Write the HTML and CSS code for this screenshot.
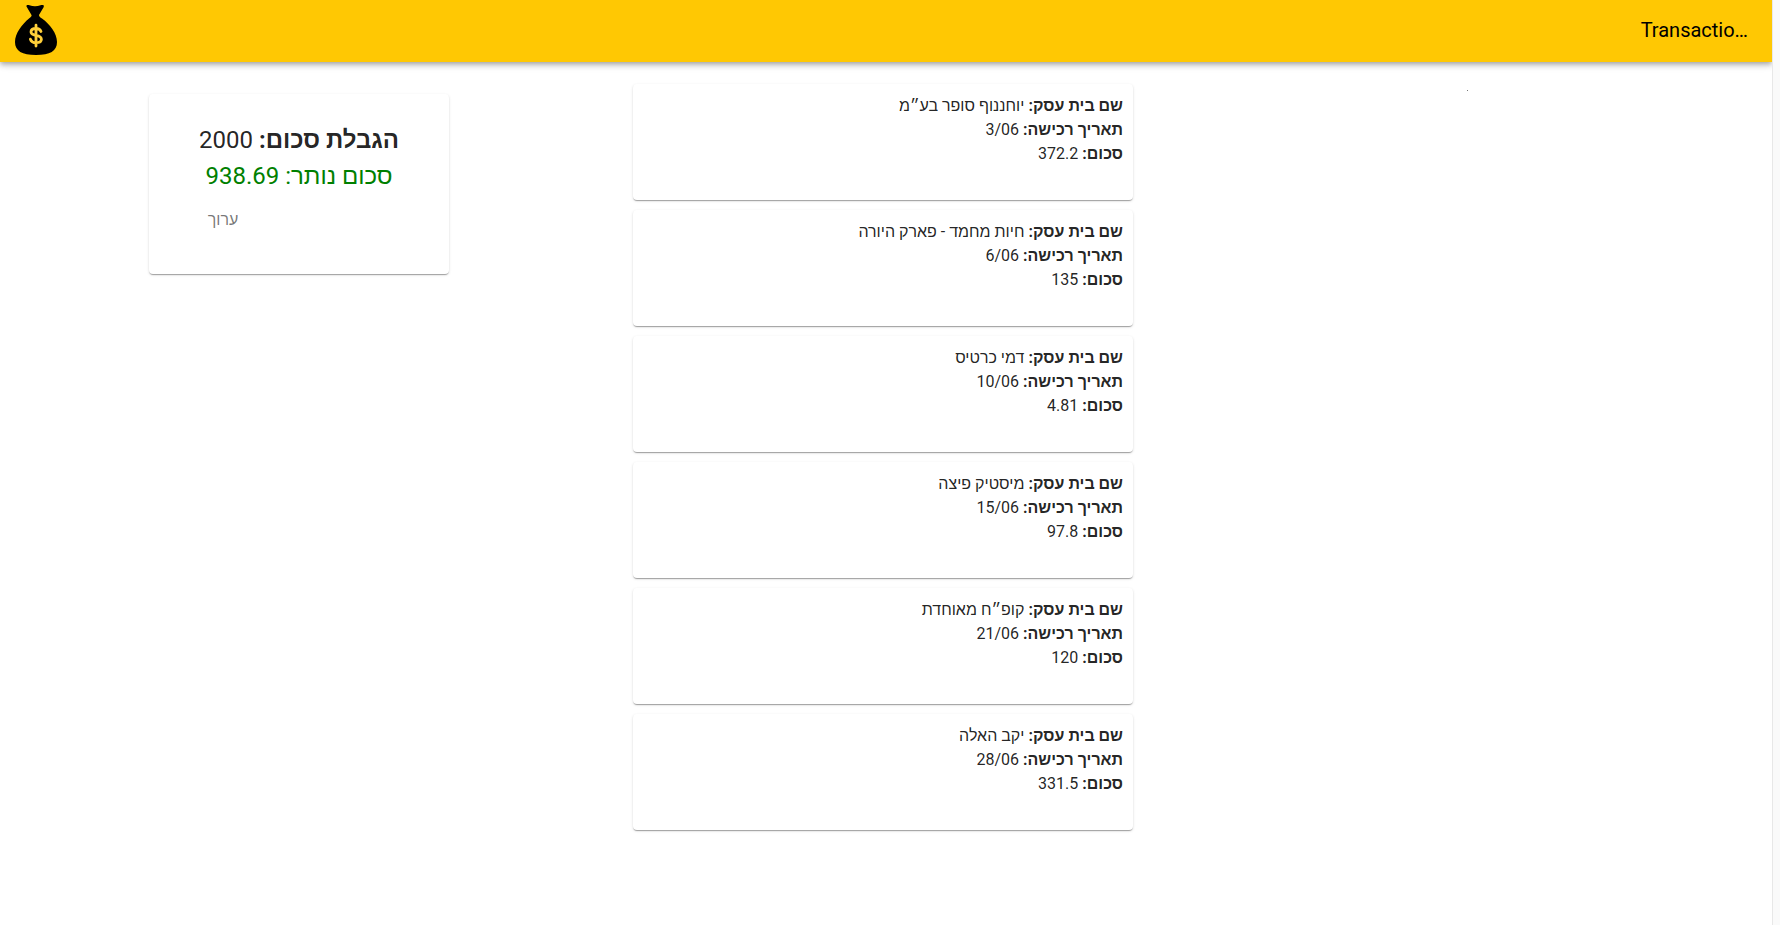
FILE: index.html
```html
<!DOCTYPE html>
<html lang="he">
<head>
<meta charset="utf-8">
<meta name="viewport" content="width=device-width, initial-scale=1">
<title>Transactions</title>
<link rel="stylesheet" href="styles.css">
</head>
<body>
<div class="page">
  <header class="app-bar">
    <svg class="logo" viewBox="0 0 42 50" aria-hidden="true">
      <path d="M11.500 1.500C11 0 13 -0.300 14.500 0.300C18 1.700 22 1.700 25.500 0.300C28 -0.300 29.500 0 28.600 2.200L24 10C24 11.500 25 12.200 27 13.600C35 19.500 42 28.500 42 37C42 46 35 50 21 50C7 50 0 46 0 37C0 28.500 7 19.500 14 13.600C15.500 12.400 17 11.500 16.500 10Z"/>
      <path class="coin" d="M26 26.500C25.200 24.300 23.300 23.500 21 23.500C18 23.500 16 24.800 16 27C16 31.800 26.400 29 26.400 34.200C26.400 36.600 24.200 37.700 21 37.700C18.200 37.700 16.200 36.600 15.400 34.200M21 20.200V41"/>
    </svg>
    <h1 class="title">Transactio…</h1>
  </header>
  <main class="columns">
    <section class="card limit">
      <p class="limit-line"><b>הגבלת סכום:</b> 2000</p>
      <p class="limit-line remaining">סכום נותר: 938.69</p>
      <button class="edit" type="button">ערוך</button>
    </section>
    <section class="list">
      <article class="card transaction">
        <p><b>שם בית עסק:</b> יוחננוף סופר בע״מ</p>
        <p><b>תאריך רכישה:</b> <bdi>3/06</bdi></p>
        <p><b>סכום:</b> 372.2</p>
      </article>
      <article class="card transaction">
        <p><b>שם בית עסק:</b> חיות מחמד - פארק היורה</p>
        <p><b>תאריך רכישה:</b> <bdi>6/06</bdi></p>
        <p><b>סכום:</b> 135</p>
      </article>
      <article class="card transaction">
        <p><b>שם בית עסק:</b> דמי כרטיס</p>
        <p><b>תאריך רכישה:</b> <bdi>10/06</bdi></p>
        <p><b>סכום:</b> 4.81</p>
      </article>
      <article class="card transaction">
        <p><b>שם בית עסק:</b> מיסטיק פיצה</p>
        <p><b>תאריך רכישה:</b> <bdi>15/06</bdi></p>
        <p><b>סכום:</b> 97.8</p>
      </article>
      <article class="card transaction">
        <p><b>שם בית עסק:</b> קופ״ח מאוחדת</p>
        <p><b>תאריך רכישה:</b> <bdi>21/06</bdi></p>
        <p><b>סכום:</b> 120</p>
      </article>
      <article class="card transaction">
        <p><b>שם בית עסק:</b> יקב האלה</p>
        <p><b>תאריך רכישה:</b> <bdi>28/06</bdi></p>
        <p><b>סכום:</b> 331.5</p>
      </article>
    </section>
    <section class="chart"><span class="dot"></span></section>
  </main>
</div>
<div class="gutter"></div>
</body>
</html>
```
FILE: styles.css
```css
* { box-sizing: border-box; }
body {
  margin: 0;
  min-height: 100vh;
  display: flex;
  background: #fff;
  color: rgba(0, 0, 0, 0.87);
  font: 16px/24px Roboto, "Liberation Sans", Arial, sans-serif;
}
p, h1 { margin: 0; }
.page { flex: 1; min-width: 0; }
.gutter {
  width: 8px;
  background: #fafafa;
  border-left: 1px solid #e8e8e8;
}
.app-bar {
  display: flex;
  align-items: center;
  justify-content: space-between;
  height: 62px;
  padding: 0 24px 2px 15px;
  background: #ffc803;
  color: #000;
  box-shadow: 0 2px 4px -1px rgba(0,0,0,.2), 0 4px 5px rgba(0,0,0,.14), 0 1px 10px rgba(0,0,0,.12);
}
.logo { width: 42px; height: 50px; }
.coin { fill: none; stroke: #ffd03a; stroke-width: 2.8; stroke-linecap: round; }
.title {
  white-space: nowrap;
  font-size: 20px;
  font-weight: 400;
  line-height: 30px;
}
.columns {
  display: grid;
  grid-template-columns: repeat(3, 1fr);
  align-items: start;
  justify-items: center;
  padding: 22px 13px 22px 7px;
}
.card {
  border-radius: 4px;
  background: #fff;
  box-shadow: 0 2px 1px -1px rgba(0,0,0,.2), 0 1px 1px rgba(0,0,0,.14), 0 1px 3px rgba(0,0,0,.12);
}
.limit {
  width: 300px;
  min-height: 180px;
  margin-top: 10px;
  padding: 28px 16px;
  text-align: center;
}
.limit-line {
  direction: rtl;
  font-size: 24px;
  line-height: 36px;
}
.remaining { color: #008000; }
.edit {
  display: block;
  width: 64px;
  margin: 8px 0 0 26px;
  padding: 6px 8px;
  border: 0;
  background: none;
  color: rgba(0, 0, 0, 0.54);
  font: inherit;
  font-size: 16px;
}
.list {
  display: grid;
  gap: 10px;
  width: 100%;
  max-width: 500px;
}
.transaction {
  min-height: 116px;
  padding: 10px;
  direction: rtl;
}
.chart { padding-top: 6px; }
.dot {
  display: block;
  width: 1px;
  height: 1px;
  background: #777;
}
```
